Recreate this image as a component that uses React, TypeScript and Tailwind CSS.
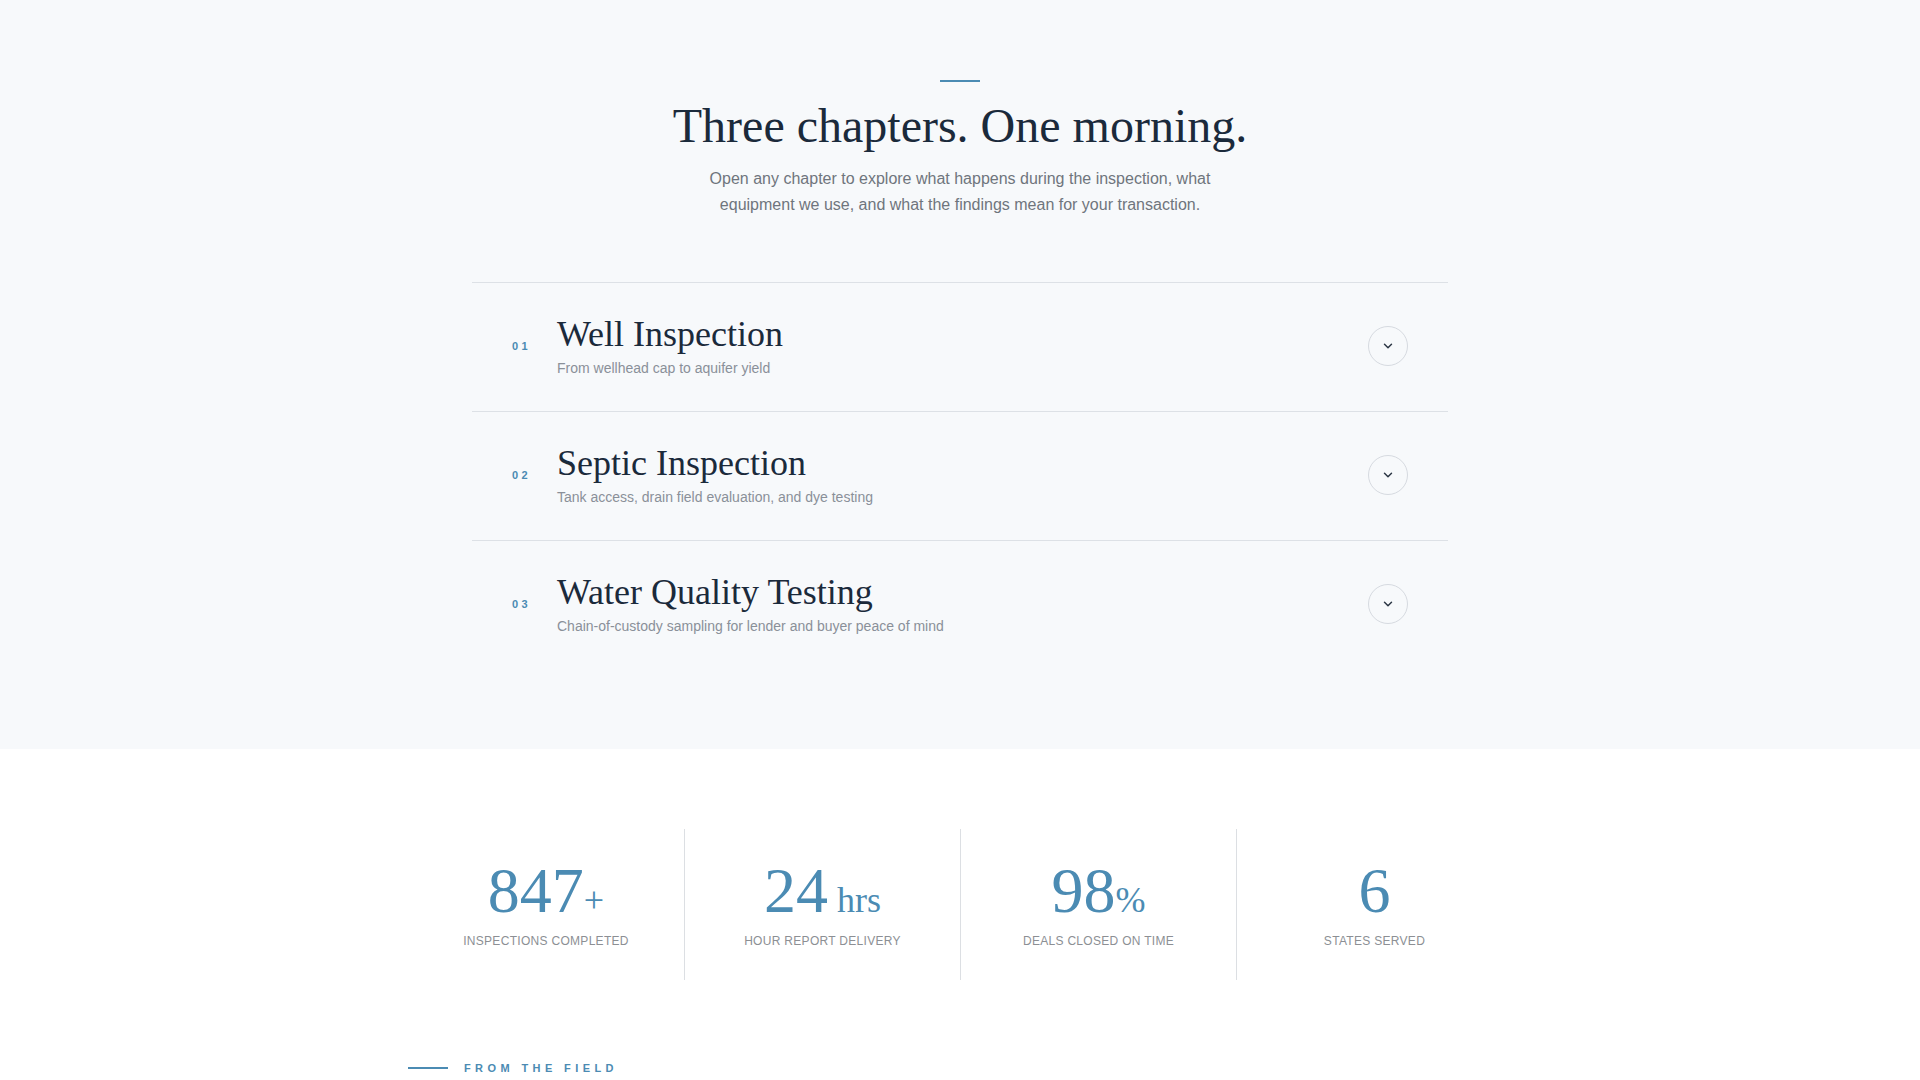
import React from 'react'
import { ChevronDown } from 'lucide-react'

const serif = { fontFamily: '"Liberation Serif", "Times New Roman", serif' }

const chapters = [
  { no: '01', title: 'Well Inspection', sub: 'From wellhead cap to aquifer yield' },
  { no: '02', title: 'Septic Inspection', sub: 'Tank access, drain field evaluation, and dye testing' },
  { no: '03', title: 'Water Quality Testing', sub: 'Chain-of-custody sampling for lender and buyer peace of mind' },
]

const stats = [
  { value: '847', suffix: '+', label: 'Inspections Completed' },
  { value: '24', suffix: ' hrs', label: 'Hour Report Delivery' },
  { value: '98', suffix: '%', label: 'Deals Closed On Time' },
  { value: '6', suffix: '', label: 'States Served' },
]

const Chapter = ({ no, title, sub }: { no: string; title: string; sub: string }): JSX.Element => {
  return (
    <div className="flex items-center border-t border-[#dde1e6] px-10 pt-8 pb-[33px]">
      <div className="w-[45px] shrink-0 text-[11px] font-bold tracking-[0.3em] text-[#4b8bb3]">{no}</div>
      <div className="flex-1">
        <h3 className="text-[36px] leading-[1.06] text-[#1b2a3b]" style={serif}>
          {title}
        </h3>
        <p className="mt-[5px] text-sm leading-5 text-[#8a9099]">{sub}</p>
      </div>
      <button className="flex h-10 w-10 items-center justify-center rounded-full border border-[#d6dae0] text-[#2b3644]">
        <ChevronDown size={14} strokeWidth={2.5} />
      </button>
    </div>
  )
}

const App = (): JSX.Element => {
  return (
    <div className="min-h-screen bg-white" style={{ fontFamily: '"Liberation Sans", Arial, sans-serif' }}>
      <section className="bg-[#f7f9fb] pt-20 pb-20">
        <div className="flex flex-col items-center text-center">
          <div className="mb-[15px] h-0.5 w-10 bg-[#4b8bb3]" />
          <h2 className="text-5xl leading-[1.2] text-[#1b2a3b]" style={serif}>
            Three chapters. One morning.
          </h2>
          <p className="mt-[11px] max-w-[530px] text-base leading-relaxed text-[#6f757d]">
            Open any chapter to explore what happens during the inspection, what equipment we use, and what the
            findings mean for your transaction.
          </p>
        </div>
        <div className="mx-auto mt-16 max-w-5xl px-6">
          {chapters.map((c) => (
            <Chapter key={c.no} {...c} />
          ))}
        </div>
      </section>

      <section className="pt-20 pb-20">
        <div className="mx-auto grid max-w-6xl grid-cols-4 px-6">
          {stats.map((s, i) => (
            <div
              key={s.label}
              className={`pt-[30px] pb-[31px] text-center ${i > 0 ? 'border-l border-[#dcdfe3]' : ''}`}
            >
              <div className="text-[64px] leading-none text-[#4b8bb3]" style={serif}>
                {s.value}
                {s.suffix && <span className="text-4xl whitespace-pre">{s.suffix}</span>}
              </div>
              <div className="mt-[10px] text-xs uppercase tracking-wide text-[#8c8f94]">{s.label}</div>
            </div>
          ))}
        </div>
      </section>

      <section className="pb-20">
        <div className="mx-auto max-w-6xl px-6">
          <div className="flex items-center gap-4">
            <div className="h-0.5 w-10 bg-[#4b8bb3]" />
            <span className="text-[11px] font-bold uppercase leading-4 tracking-[0.4em] text-[#4b8bb3]">
              From the field
            </span>
          </div>
        </div>
      </section>
    </div>
  )
}

export default App
